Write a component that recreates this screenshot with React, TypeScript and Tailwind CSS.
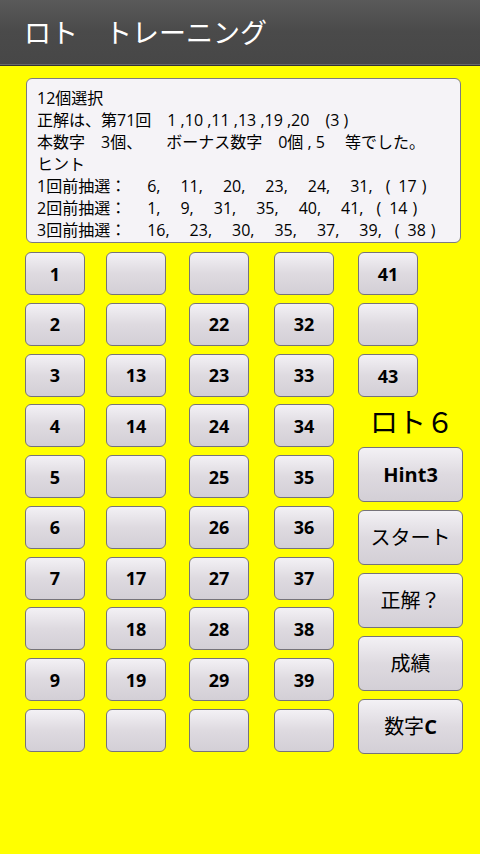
import React from "react";

const FONT = { fontFamily: '"Open Sans", "Noto Sans CJK JP", sans-serif' };

const COLS: string[][] = [
  ["1", "2", "3", "4", "5", "6", "7", "", "9", ""],
  ["", "", "13", "14", "", "", "17", "18", "19", ""],
  ["", "22", "23", "24", "25", "26", "27", "28", "29", ""],
  ["", "32", "33", "34", "35", "36", "37", "38", "39", ""],
];

const COL_MARGINS = ["ml-0", "ml-[21px]", "ml-[23px]", "ml-[25px]"];

const LINES = [
  "12個選択",
  "正解は、第71回　1 ,10 ,11 ,13 ,19 ,20　(3 )",
  "本数字　3個、　　ボーナス数字　0個 , 5 　等でした。",
  "ヒント",
];

const HINTS = [
  { label: "1回前抽選：", nums: [6, 11, 20, 23, 24, 31], bonus: 17 },
  { label: "2回前抽選：", nums: [1, 9, 31, 35, 40, 41], bonus: 14 },
  { label: "3回前抽選：", nums: [16, 23, 30, 35, 37, 39], bonus: 38 },
];

const BTN =
  "flex items-center justify-center rounded-[6px] border border-[#76737a] bg-gradient-to-b from-[#f3f1f5] via-[#dedae0] to-[#d3cfd6] text-black font-bold";

function NumButton({ label }: { label: string }) {
  return (
    <div className={`${BTN} w-[60px] h-[43px] text-[18px] leading-none`}>
      {label}
    </div>
  );
}

function BigButton({ children }: { children: React.ReactNode }) {
  return (
    <div className={`${BTN} w-[105px] h-[55px] text-[20px] leading-none`}>
      {children}
    </div>
  );
}

export default function App() {
  return (
    <div className="w-[480px] h-[854px] bg-[#ffff00] overflow-hidden" style={FONT}>
      {/* Title bar */}
      <div className="h-[64px] bg-gradient-to-b from-[#5a5a5a] via-[#4a4a4a] to-[#474747] flex items-center pl-[24px]">
        <span className="text-white text-[27px] leading-none">ロト　トレーニング</span>
      </div>
      <div className="h-px bg-[#6a6a6a]" />
      <div className="h-px bg-[#333333]" />

      {/* Result box */}
      <div className="ml-[26px] mt-[12px] w-[435px] h-[165px] rounded-[6px] border border-[#7d7b80] bg-[#f5f3f7] pl-[10px] pt-[8px] text-[16px] leading-[22px] text-black">
        {LINES.map((line, i) => (
          <div key={i} className="whitespace-pre">
            {line}
          </div>
        ))}
        {HINTS.map((h) => (
          <div key={h.label} className="whitespace-pre flex">
            <span>{h.label}</span>
            <span className="ml-[21px]" />
            {h.nums.map((n, i) => (
              <span key={i} className={i < h.nums.length - 1 ? "mr-[20px]" : "mr-[13px]"}>
                {n},
              </span>
            ))}
            <span>(</span>
            <span className="ml-[8px]">{h.bonus}</span>
            <span className="ml-[5px]">)</span>
          </div>
        ))}
      </div>

      {/* Buttons */}
      <div className="flex ml-[25px] mt-[9px]">
        {COLS.map((col, ci) => (
          <div key={ci} className={`flex flex-col justify-between h-[500px] ${COL_MARGINS[ci]}`}>
            {col.map((n, ri) => (
              <NumButton key={ri} label={n} />
            ))}
          </div>
        ))}
        <div className="flex flex-col ml-[24px]">
          <NumButton label="41" />
          <div className="mt-[8px]">
            <NumButton label="" />
          </div>
          <div className="mt-[8px]">
            <NumButton label="43" />
          </div>
          <div className="h-[50px] flex items-center pl-[12px] text-[28px] leading-none text-black">
            ロト６
          </div>
          <div className="flex flex-col gap-[8px]">
            <BigButton>Hint3</BigButton>
            <BigButton>
              <span className="font-normal">スタート</span>
            </BigButton>
            <BigButton>
              <span className="font-normal">正解？</span>
            </BigButton>
            <BigButton>
              <span className="font-normal">成績</span>
            </BigButton>
            <BigButton>
              <span className="font-normal">数字</span>C
            </BigButton>
          </div>
        </div>
      </div>
    </div>
  );
}
